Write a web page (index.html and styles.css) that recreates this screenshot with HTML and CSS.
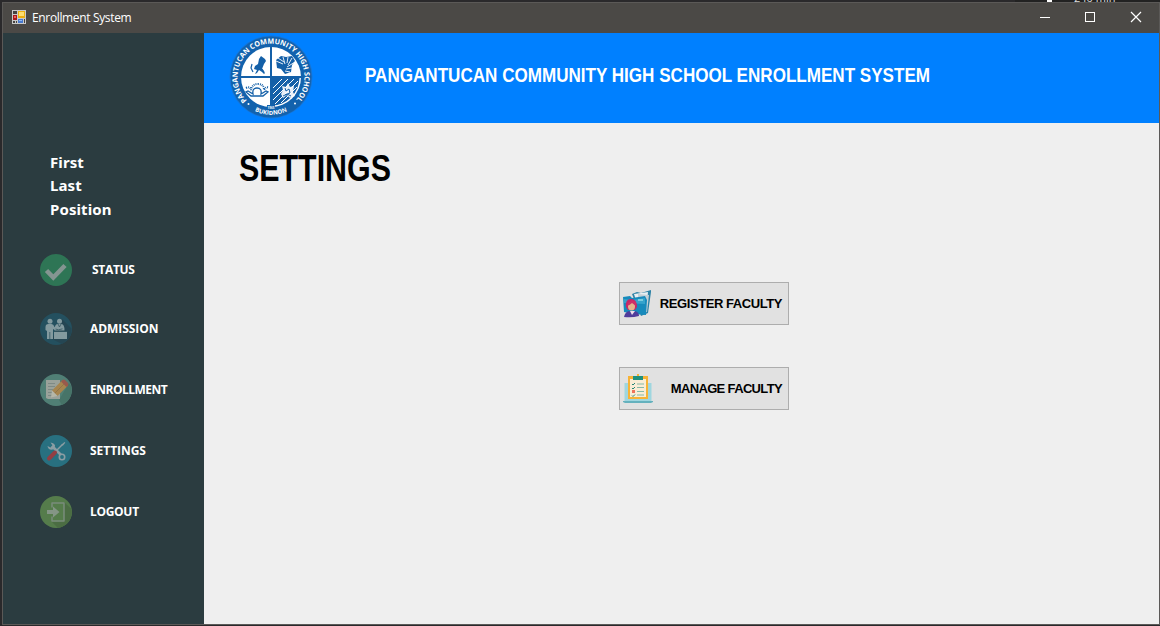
FILE: index.html
```html
<!DOCTYPE html>
<html lang="en">
<head>
<meta charset="utf-8">
<title>Enrollment System</title>
<link rel="stylesheet" href="styles.css">
</head>
<body>
<div class="backdrop"><i class="mark"></i><span class="peek">240 min</span></div>
<div class="window">
  <header class="titlebar">
    <svg class="app-icon" width="14" height="14" viewBox="0 0 14 14">
      <rect width="14" height="14" fill="#c9c9c9"/>
      <path d="M1 1h4v3H1zM1 11h2v2H1zM4 11h1v2H4zM12 9h1v4h-1z" fill="#454341"/>
      <rect x="1" y="5" width="4" height="5" fill="#a8181b"/><rect x="2" y="6" width="2" height="2" fill="#e8605a"/>
      <rect x="6" y="1" width="7" height="7" fill="#eeb010"/><rect x="7" y="2" width="5" height="4" fill="#ffdf70"/>
      <rect x="6" y="9" width="5" height="4" fill="#4779cf"/><rect x="7" y="10" width="3" height="1" fill="#91b9f5"/>
    </svg>
    <span class="caption">Enrollment System</span>
    <svg class="controls" width="102" height="12" viewBox="0 0 102 12" fill="none" stroke="#fff">
      <path d="M0 6.500h10"/>
      <rect x="45.500" y="1.500" width="9" height="9"/>
      <path d="M91 1l10 10M101 1L91 11" stroke-width="1.200"/>
    </svg>
  </header>
  <div class="body">
    <aside class="sidebar">
      <div class="user"><span>First</span><span>Last</span><span>Position</span></div>
      <nav class="menu">
        <a class="item status">
          <svg width="32" height="32" viewBox="0 0 32 32"><circle cx="16" cy="16" r="16" fill="#2e7555"/><path d="M6.500 16.500l6.800 7L25 11.500" fill="none" stroke="#849591" stroke-width="4.600"/></svg>
          <span>STATUS</span>
        </a>
        <a class="item admission">
          <svg width="32" height="32" viewBox="0 0 32 32"><circle cx="16" cy="16" r="16" fill="#24505f"/><path d="M22 6l9.500 9.500A16 16 0 0 1 22 31L12 26z" fill="#254653"/><g fill="#839a9f"><circle cx="10" cy="8.300" r="2.500"/><circle cx="19.500" cy="8.300" r="2.500"/><path d="M5.500 14q0-3 3-3h3q2 0 3 3l2 2-1 1.500-2.500-1.500V26H7v-8l-1.500-1zM14.500 17.500q0-6.500 3-6.500h4q3 0 3 6.500zM14 19h13v7H14z"/></g><path d="M18 11l1.500 3 1.500-3M9.800 19v7M15.500 16l3 .8 4-1M14 18.500h13" fill="none" stroke="#355761" stroke-width=".8"/></svg>
          <span>ADMISSION</span>
        </a>
        <a class="item enrollment">
          <svg width="32" height="32" viewBox="0 0 32 32"><circle cx="16" cy="16" r="16" fill="#507f75"/><path d="M19 26L29 9l2 3a16 16 0 0 1-9 19z" fill="#477468"/><path d="M6 6h14v19H8l-2-1z" fill="#9aa29a"/><path d="M8 9.500h7M8 12.500h7M8 15.500h5M8 18.500h4M8 21.500h4" stroke="#7d8a85"/><path d="M12 16.500L22.500 6l5.500 5.500L17.500 22z" fill="#a6854e"/><path d="M14.500 19.500L25.500 8.500" stroke="#927546"/><path d="M21 7.500L22.500 6q1.500-1 3 .5l2 2q1.500 1.500.5 3L26.500 13z" fill="#98594c"/><path d="M12 16.500l5.500 5.500-6.500 1.500z" fill="#b5b7a8"/></svg>
          <span>ENROLLMENT</span>
        </a>
        <a class="item settings">
          <svg width="32" height="32" viewBox="0 0 32 32"><circle cx="16" cy="16" r="16" fill="#287080"/><path d="M12 11l10 10" stroke="#8b9da3" stroke-width="2.600"/><path d="M10.500 7.500q3 0 4.500 2.500l-.5 4-3 .8Q8 14.500 7.500 11l3 1.500 2-2z" fill="#8b9da3"/><circle cx="22" cy="22" r="2.700" fill="#287080" stroke="#8b9da3" stroke-width="1.600"/><path d="M14 18l8.500-8.500" stroke="#8b9da3" stroke-width="1.500"/><path d="M21.500 9.500L24.500 7l.8.800-2.500 3z" fill="#8b9da3"/><path d="M9 23.500l6-6" stroke="#923e43" stroke-width="4" stroke-linecap="round"/></svg>
          <span>SETTINGS</span>
        </a>
        <a class="item">
          <svg width="32" height="32" viewBox="0 0 32 32"><circle cx="16" cy="16" r="16" fill="#557c4b"/><path d="M24 6l7.500 7A16 16 0 0 1 18 32l-6-6 12-1z" fill="#4b6d43"/><path d="M12 11.500V7h12v18H12v-4.500" fill="none" stroke="#7a8c7c" stroke-width="1.500" stroke-linejoin="round"/><path d="M7 14h6v-3.500l6.500 5.500-6.500 5.500V18H7z" fill="#849585"/></svg>
          <span>LOGOUT</span>
        </a>
      </nav>
    </aside>
    <main class="content">
      <div class="banner">
        <svg class="seal" width="84" height="84" viewBox="-42 -42 84 84">
          <defs><path id="ringTop" d="M-24 23.500A33.500 33.500 0 1 1 24 23.500"/><path id="ringBottom" d="M-25 28.300A37.700 37.700 0 0 0 25 28.300"/></defs>
          <circle r="41.500" fill="#1675d6"/><circle r="40.500" fill="#1262ad"/>
          <circle r="30" fill="#fff"/>
          <path d="M1 1H28.500A28.500 28.500 0 0 1 1 28.500z" fill="#1460a8"/>
          <path d="M0-30V29M-30 0H30" stroke="#1460a8" stroke-width="2"/>
          <path d="M2 11L11 2M2 17L17 2M2 23L23 2M4 27L27 4M10 26L26 10" stroke="#fff" stroke-width="1"/>
          <path d="M-10-21l-2 3-1 5-3 2-1 3 3 1-2 4 2-1 2-3 3 2 2 2 1-1-3-4 2-5 2-3-1-2z" fill="#1460a8"/>
          <path d="M-19-13l-1 4 2 4M-9-8l2 3" fill="none" stroke="#1460a8" stroke-width="1.200"/>
          <path d="M5-17l5-4 5 1 6-1 3 5-3 4-1 7-6 2-4-5-4-1z" fill="#1460a8"/>
          <path d="M5-16l7 3M7-19l6 4M12-20l2 7M17-20l-1 6M21-19l-4 7M24-15l-8 5M21-9l-6 1M19-5l-5-1" stroke="#fff" stroke-width=".9"/>
          <path d="M-25 11q4-2 5 2 1-6 7-6t6 6q2-4 5-2" fill="none" stroke="#1460a8" stroke-width="2" stroke-dasharray="1 1"/>
          <path d="M-18 17q-1-6 4-6t4 6l5-3 2 1-5 4h-12l-5-4 2-1z" fill="none" stroke="#1460a8" stroke-width="1.300"/>
          <path d="M11 9l4 1 2-4 2 4 4-1-1 6 2 4-5 2-3-3-4 3-2-4 2-4z" fill="#fff" opacity=".9"/><path d="M14 11l1 3 3-2 1 4-5 2M12 19l4-2 4 2" fill="none" stroke="#1460a8"/>
          <circle cx="-22.500" cy="27" r="1" fill="#fff"/><circle cx="24" cy="26.500" r="1" fill="#fff"/>
          <text class="ring-text"><textPath href="#ringTop" textLength="155" lengthAdjust="spacingAndGlyphs">PANGANTUCAN COMMUNITY HIGH SCHOOL</textPath></text>
          <text class="ring-text small"><textPath href="#ringBottom" startOffset="50%" text-anchor="middle">BUKIDNON</textPath></text>
          <rect x="-4" y="28" width="8" height="4" fill="#1262ad"/><text class="year" x="0" y="31.500" text-anchor="middle">1965</text>
        </svg>
        <svg class="banner-title" width="567" height="28"><text x="1" y="22" textLength="565" lengthAdjust="spacingAndGlyphs">PANGANTUCAN COMMUNITY HIGH SCHOOL ENROLLMENT SYSTEM</text></svg>
      </div>
      <svg class="page-title" width="154" height="42"><text x="0" y="33" textLength="152" lengthAdjust="spacingAndGlyphs">SETTINGS</text></svg>
      <div class="actions">
        <button class="action">
          <svg width="30" height="30" viewBox="0 0 30 30"><path d="M9 5l5-2 4 1 10-3v2l-3 21-7 3z" fill="#2d82a6"/><path d="M11 5l14-2-2 20-6 2z" fill="#e9eff2"/><path d="M15 5l11 1-2 17-9 2z" fill="#c5d0d6"/><path d="M0 8l7-1 2 2 13-2 2 4-1 15-12-1-10-2z" fill="#178abc"/><path d="M1 10l8 1 13-2v6l-21-1z" fill="#36a3cc"/><path d="M15 10h5v2h-5z" fill="#7accdf"/><path d="M3 18Q2 10 8 10t6 8l-2 3H5z" fill="#c62866"/><ellipse cx="8.500" cy="17.500" rx="3.500" ry="4" fill="#e6b48c"/><path d="M4 17q3-1 5-3l4 3v-4l-4-2-4 3z" fill="#cf2f68"/><path d="M1 28q1-5 5-6l3 2 3-2q4 1 4 5-7 2-15 1z" fill="#513d9b"/><path d="M7 22l2 4 3-4z" fill="#f0ddea"/></svg>
          <span>REGISTER FACULTY</span>
        </button>
        <button class="action manage">
          <svg width="30" height="30" viewBox="0 0 30 30"><path d="M1.500 9h27v18h-27z" fill="#9fd6df"/><path d="M0 27h30v1l-2 1H2l-2-1z" fill="#65b1bd"/><path d="M14 0h2v2h-2zM5 2h20v23H5z" fill="#f7b336"/><path d="M7 5h16v18H7z" fill="#f9edd6"/><path d="M10 2h10v4H10z" fill="#1e917f"/><path d="M9 10l1 1 2-2M9 14l1 1 2-2M9 21.500l1 1 2-2" fill="none" stroke="#288678"/><path d="M9 16h3v3H9z" fill="#ef735a"/><path d="M14 10h7M14 13.500h7M14 17.500h7M14 21h7" stroke="#86b9a7"/></svg>
          <span>MANAGE FACULTY</span>
        </button>
      </div>
    </main>
  </div>
</div>
</body>
</html>
```
FILE: styles.css
```css
* { box-sizing: border-box; }
body {
  margin: 0;
  width: 1160px;
  height: 626px;
  overflow: hidden;
  background: #2a292b;
  font-family: "Open Sans", "Noto Sans", sans-serif;
}
svg { display: block; flex: none; }
.backdrop {
  position: absolute;
  top: 0;
  left: 1015px;
  width: 145px;
  height: 2px;
  overflow: hidden;
  background: #222;
}
.mark { position: absolute; left: 32px; width: 5px; height: 2px; background: #fff; }
.peek {
  position: absolute;
  left: 59px;
  top: -8px;
  color: #ddd;
  font-size: 11px;
  line-height: 12px;
}
.window {
  height: 623px;
  margin: 2px 0 0 2px;
  border: 1px solid #5b5957;
  display: flex;
  flex-direction: column;
}
.titlebar {
  height: 30px;
  flex: none;
  display: flex;
  align-items: center;
  padding: 0 17px 2px 9px;
  background: #4b4946;
  color: #fff;
}
.caption { margin-left: 6px; font-size: 12px; letter-spacing: -.35px; }
.controls { margin-left: auto; }
.body { display: flex; flex: 1; min-height: 0; }
.sidebar { width: 201px; flex: none; background: #2b3c40; color: #fff; font-weight: 700; }
.user {
  display: flex;
  flex-direction: column;
  height: 189px;
  padding: 118px 0 0 47px;
  font: 700 15px/23.400px "Noto Sans", sans-serif;
  letter-spacing: .1px;
}
.menu { display: flex; flex-direction: column; gap: 29px; padding: 32px 0 0 37px; }
.item {
  display: flex;
  align-items: center;
  gap: 18px;
  height: 32px;
  font-size: 12px;
  letter-spacing: -.3px;
}
.item span { line-height: 18px; margin-top: -1px; }
.status { gap: 20px; }
.admission { margin-top: -2px; letter-spacing: -.05px; }
.enrollment { letter-spacing: -.5px; }
.settings { letter-spacing: -.05px; }
.content { flex: 1; background: #efefef; }
.banner { display: flex; align-items: center; height: 90px; padding-left: 25px; background: #0080ff; }
.seal { margin-bottom: 2px; }
.ring-text { fill: #fff; font: 700 7.300px "Open Sans", sans-serif; }
.small { font-size: 6px; }
.year { fill: #fff; font: 700 3px "Open Sans", sans-serif; }
.banner-title {
  margin: 0 0 8px 51px;
  overflow: visible;
  fill: #fff;
  font: 700 21px "Liberation Sans Narrow", "Liberation Sans", sans-serif;
}
.page-title {
  margin: 25px 0 0 35px;
  overflow: visible;
  font: 700 37px "Liberation Sans Narrow", "Liberation Sans", sans-serif;
}
.actions { display: flex; flex-direction: column; gap: 42px; padding: 92px 0 0 415px; }
.action {
  display: flex;
  align-items: center;
  justify-content: space-between;
  width: 170px;
  height: 43px;
  padding: 0 6px 0 3px;
  border: 1px solid #adadad;
  background: #e1e1e1;
  color: #000;
  font: 700 13px "Liberation Sans", sans-serif;
  letter-spacing: -.43px;
}
.manage { letter-spacing: -.65px; }
```
